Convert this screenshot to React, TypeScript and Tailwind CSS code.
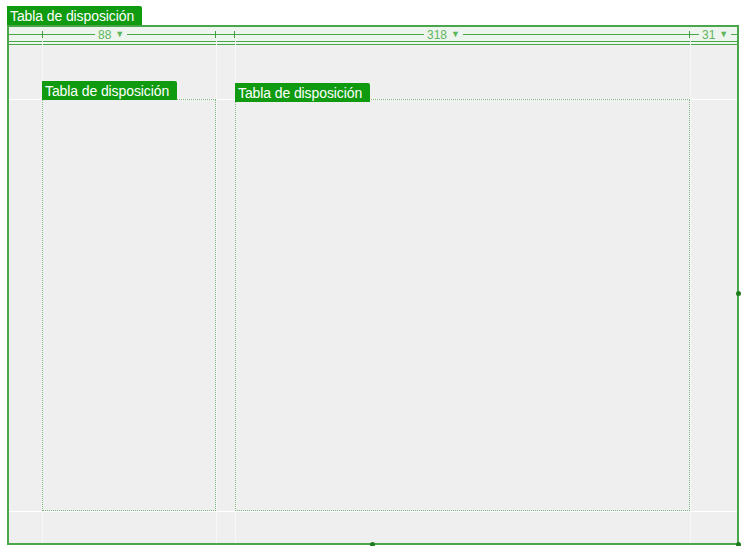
const font = { fontFamily: '"Liberation Sans", Arial, sans-serif' };

function Tab({ className = "" }: { className?: string }) {
  return (
    <div
      className={`flex h-[19px] w-[135px] items-center rounded-tr-[2px] bg-[#0f9a0f] pl-[3px] text-[14px] leading-none tracking-[-0.1px] text-white ${className}`}
    >
      Tabla de disposición
    </div>
  );
}

function Tick() {
  return <div className="h-[7px] w-px bg-[#3f9e3f]" />;
}

function RulerLabel({ text }: { text: string }) {
  return (
    <span className="flex items-center gap-[4px] bg-[#eef4ee] px-[3px] text-[12px] leading-none text-[#5db75d]">
      {text}
      <span className="text-[9px]">▼</span>
    </span>
  );
}

export default function App() {
  return (
    <div className="h-[546px] w-[743px] bg-white" style={font}>
      <div className="pl-[7px] pt-[6px]">
        <Tab />
        <div className="relative h-[520px] w-[732px] border-2 border-[#4aa64a] bg-[#efefef]">
          {/* ruler */}
          <div className="relative h-[18px] bg-[#eef4ee]">
            <div className="absolute left-0 right-0 top-[7px] h-px bg-[#4aa84a]" />
            <div className="absolute left-0 right-0 top-[14px] h-px bg-[#4aa84a]" />
            <div className="absolute left-0 right-0 top-[17px] h-px bg-[#4aa84a]" />
            <div className="relative grid h-[15px] grid-cols-[33px_174px_19px_455px_47px] items-center">
              <div />
              <div className="flex items-center">
                <Tick />
                <div className="flex flex-1 justify-start pl-[52px]">
                  <RulerLabel text="88" />
                </div>
                <Tick />
              </div>
              <div className="flex items-center justify-end">
                <Tick />
              </div>
              <div className="flex items-center">
                <div className="flex flex-1 justify-start pl-[189px]">
                  <RulerLabel text="318" />
                </div>
                <Tick />
              </div>
              <div className="flex items-center pl-[9px]">
                <RulerLabel text="31" />
              </div>
            </div>
          </div>

          {/* body */}
          <div className="relative grid h-[498px] grid-cols-[33px_174px_19px_455px_47px] grid-rows-[54px_412px_32px]">
            {/* guides */}
            <div className="pointer-events-none absolute left-0 right-0 top-[54px] h-px bg-white" />
            <div className="pointer-events-none absolute left-0 right-0 top-[466px] h-px bg-white" />
            <div className="pointer-events-none absolute -top-[4px] bottom-0 left-[33px] w-px bg-[#f8f8f8]" />
            <div className="pointer-events-none absolute -top-[4px] bottom-0 left-[207px] w-px bg-[#f8f8f8]" />
            <div className="pointer-events-none absolute -top-[4px] bottom-0 left-[226px] w-px bg-[#f8f8f8]" />
            <div className="pointer-events-none absolute -top-[4px] bottom-0 left-[681px] w-px bg-[#f8f8f8]" />

            <div className="relative col-start-2 row-start-2 border border-dotted border-[#7cb67c]">
              <Tab className="absolute -left-px -top-[19px]" />
            </div>
            <div className="relative col-start-4 row-start-2 border border-dotted border-[#7cb67c]">
              <Tab className="absolute -left-px -top-[17px]" />
            </div>
          </div>

          {/* handles */}
          <div className="absolute -right-[4px] top-[264px] h-[5px] w-[5px] rounded-full bg-[#1d7d1d]" />
          <div className="absolute -bottom-[4px] left-[361px] h-[5px] w-[5px] rounded-full bg-[#1d7d1d]" />
          <div className="absolute -bottom-[4px] -right-[4px] h-[5px] w-[5px] rounded-full bg-[#1d7d1d]" />
        </div>
      </div>
    </div>
  );
}
